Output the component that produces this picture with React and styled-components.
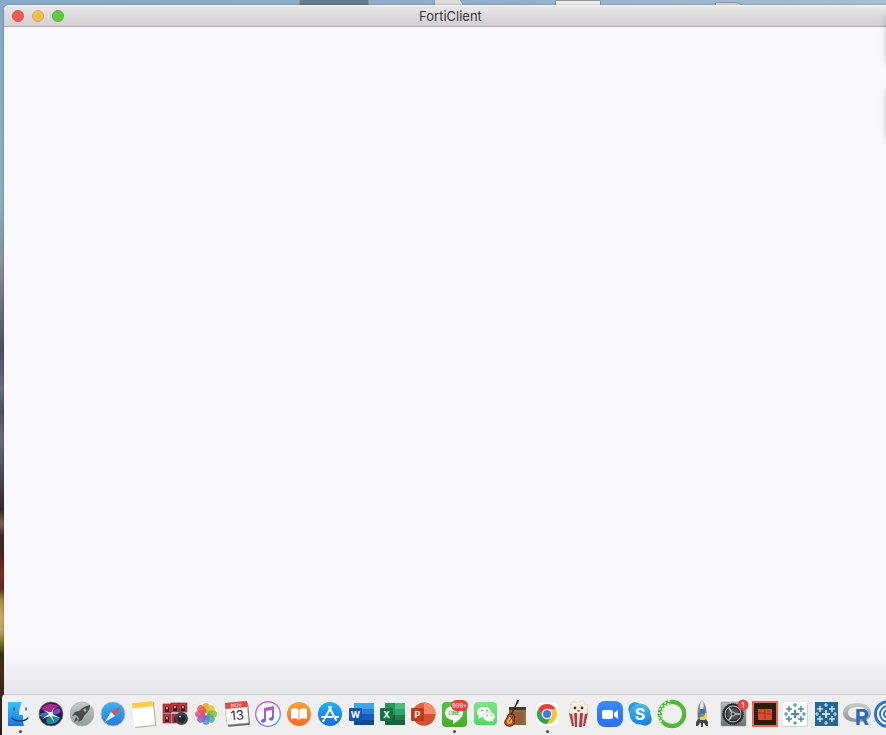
import styled, { createGlobalStyle, css } from 'styled-components';

const GlobalStyle = createGlobalStyle`
  body {
    margin: 0;
    font-family: Inter, 'Liberation Sans', sans-serif;
  }
`;

const Desktop = styled.div`
  position: relative;
  display: flex;
  flex-direction: column;
  height: 100vh;
  overflow: hidden;
  background:
    linear-gradient(
      #86a9c8 0, #8cadc8 200px, #7f97aa 250px, #8c969c 258px, #6f7683 300px,
      #4a505f 350px, #6a6f80 390px, #4c5160 410px, #6a6b7c 440px, #4a4852 475px,
      #332c2c 510px, #84604f 524px, #3a2a28 535px, #4a2420 555px, #7b3020 575px,
      #5a2a20 588px, #a58a3a 600px, #c9a860 615px, #c8a060 630px, #7f7a20 642px,
      #2d3410 655px, #4a2c18 670px, #3a2218 700px, #2a1a14 735px
    ) left / 5px 100% no-repeat,
    linear-gradient(90deg, #86a9c8, #93b1cf 60%, #a9bed2) #86a9c8;
`;

const DesktopFile = styled.div`
  position: absolute;
  top: ${({ $top }) => $top}px;
  left: ${({ $left }) => $left}px;
  width: ${({ $width }) => $width}px;
  height: 20px;
  box-sizing: border-box;
  border: 1px solid #8f9498;
  border-radius: 1px ${({ $fold }) => ($fold ? '12px' : '1px')} 0 0;
  background: ${({ $color }) => $color};
`;

const Window = styled.main`
  position: relative;
  display: flex;
  flex: 1;
  flex-direction: column;
  min-height: 0;
  margin: 5px -11px 0 4px;
  border-radius: 5px 5px 0 0;
  background: #f9f8fe;
  box-shadow: 0 0 2px rgba(0, 0, 0, 0.4);
`;

const TitleBar = styled.header`
  display: grid;
  grid-template-columns: 1fr auto 1fr;
  align-items: center;
  height: 22px;
  box-sizing: border-box;
  padding: 0 8px;
  border-bottom: 1px solid #b1afb3;
  border-radius: 5px 5px 0 0;
  background: linear-gradient(#eae8eb, #d1cfd2);
  box-shadow: inset 0 1px #f5f4f6;
`;

const WindowButtons = styled.div`
  display: flex;
  gap: 8px;
`;

const WindowButton = styled.button`
  width: 12px;
  height: 12px;
  padding: 0;
  border: 1px solid ${({ $edge }) => $edge};
  border-radius: 50%;
  background: ${({ $color }) => $color};
`;

const Title = styled.h1`
  margin: 0;
  color: #363438;
  font-size: 13px;
  font-weight: 400;
  line-height: 20px;
`;

const Content = styled.section`
  flex: 1;
  background: linear-gradient(transparent calc(100% - 44px), #e5e4ea) #f9f8fe;
`;

const Notice = styled.div`
  position: absolute;
  top: ${({ $top }) => $top}px;
  right: -20px;
  width: 19px;
  height: 48px;
  box-shadow: 0 0 7px rgba(0, 0, 0, 0.25);
`;

const Dock = styled.nav`
  position: relative;
  display: flex;
  flex-shrink: 0;
  height: 41px;
  box-sizing: border-box;
  margin-left: 2px;
  padding: 3px 0 0 3px;
  overflow: hidden;
  border-top: 1px solid #cccbd2;
  border-radius: 4px 0 0 0;
  background: #efeff0;
`;

const DockButton = styled.button`
  display: flex;
  flex: 0 0 31px;
  flex-direction: column;
  align-items: center;
  padding: 0;
  border: 0;
  background: none;

  ${({ $running }) =>
    $running &&
    css`
      &::after {
        content: '';
        width: 3px;
        height: 3px;
        border-radius: 50%;
        background: #4b4b4d;
      }
    `}
`;

const Icon = styled.svg`
  display: block;
  flex-shrink: 0;
  width: 31px;
  height: 32px;
  overflow: visible;
  font-family: Inter, 'Liberation Sans', sans-serif;
  text-anchor: middle;
`;

const Gradient = ({ id, from, to }) => (
  <linearGradient id={id} x1="0" y1="0" x2="0" y2="1">
    <stop offset="0" stopColor={from} />
    <stop offset="1" stopColor={to} />
  </linearGradient>
);

const Finder = () => (
  <>
    <Gradient id="finder" from="#39c3fb" to="#1b74e8" />
    <rect x="-12" y="-12" width="24" height="24" rx="1" fill="#e9f2fb" />
    <path d="M-12-12H2C0-8-1-4-1 1H3C3 5 3 9 4 12H-12Z" fill="url(#finder)" />
    <path d="M-6-6V-4M6-6V-4" stroke="#23415e" strokeWidth="1.3" strokeLinecap="round" />
    <path d="M-8 4C-4 8 4 8 8 4" fill="none" stroke="#1d3650" strokeWidth="1.2" strokeLinecap="round" />
  </>
);

const Siri = () => (
  <>
    <Gradient id="siri" from="#3a1747" to="#152346" />
    <circle r="12" fill="url(#siri)" stroke="#77758a" strokeWidth=".8" />
    <path d="M0 0C-6-1-9-4-9-6C-5-11 4-11 8-7C4-6 2-3 0 0Z" fill="#c02c9c" opacity=".85" />
    <path d="M0 0C3-4 7-7 9-5C11-1 7 1 0 0Z" fill="#7950d8" opacity=".9" />
    <path d="M0 0C-5-2-10-2-11 1C-10 5-5 4 0 0Z" fill="#3c78dc" opacity=".9" />
    <path d="M0 0C-5 4-6 8-3 10C3 11 8 7 9 4C5 1 3 0 0 0Z" fill="#249aa2" opacity=".85" />
    <path d="M0-1L3-7L1 0L9 4L1 2L3 8L-1 2L-9 5L-2 0L-7-4Z" fill="#d9f6ff" />
    <circle r="2" fill="#fff" />
  </>
);

const Launchpad = () => (
  <>
    <Gradient id="launchpad" from="#c4cbcc" to="#929998" />
    <circle r="12" fill="url(#launchpad)" stroke="#b1b8b8" strokeWidth=".8" />
    <path d="M8-9C3-8 0-6-3-3L-7-2L-10 2L-6 1L-3 4L-4 8L0 6L2 2C5-1 8-4 8-9Z" fill="#474b4c" />
    <path d="M-6 3L-8 8L-4 6" fill="#474b4c" />
    <circle cx="3" cy="-4" r="1.6" fill="#adb3b4" />
  </>
);

const Safari = () => (
  <>
    <Gradient id="safari" from="#36b5f3" to="#2475dd" />
    <circle r="12" fill="url(#safari)" stroke="#a9bccd" strokeWidth="1" />
    <circle r="9.5" fill="none" stroke="#65b8ee" strokeWidth="1" strokeDasharray=".5 1.5" />
    <path d="M8-8L-2-2L2 2Z" fill="#e74c4a" />
    <path d="M-8 8L-2-2L2 2Z" fill="#edf0f3" />
  </>
);

const Notes = () => (
  <g transform="rotate(-6)">
    <rect x="-10" y="-11" width="21" height="24" fill="#b3a98d" />
    <rect x="-11" y="-12" width="21" height="24" fill="#fefefc" />
    <rect x="-11" y="-12" width="21" height="5" fill="#f9cf45" />
    <path d="M-11-6.5H10" stroke="#c3b37a" strokeWidth=".6" strokeDasharray="1 1" />
  </g>
);

const booths = [[-12, -10], [-4, -11], [4, -11], [-12, 0], [-3, 0]];

const PhotoBooth = () => (
  <>
    {booths.map(([x, y]) => (
      <g key={`${x},${y}`} transform={`translate(${x} ${y})`}>
        <rect width="8" height="9" fill="#c23840" stroke="#752a2f" strokeWidth=".6" />
        <path d="M2 8V4Q2 2 4 2Q6 2 6 4V8Z" fill="#351b22" />
        <ellipse cx="4" cy="4" rx="1" ry="1.5" fill="#db9a86" />
      </g>
    ))}
    <circle cx="6.500" cy="4.500" r="6.500" fill="#3d3e43" />
    <circle cx="6.500" cy="4.500" r="4.500" fill="#25262b" stroke="#55575d" strokeWidth=".6" />
    <circle cx="5" cy="2.500" r="1.100" fill="#a5acb5" />
  </>
);

const petals = ['#f39a2f', '#d3ca2b', '#7fba40', '#46ae93', '#5587d4', '#8963b8', '#cd5395', '#ec5347'];

const Photos = () => (
  <>
    <circle r="12.5" fill="#fbfbfb" stroke="#d9d9d9" strokeWidth=".6" />
    {petals.map((color, i) => (
      <rect key={color} x="-3.5" y="-11" width="7" height="10" rx="3.5" fill={color} opacity=".85" transform={`rotate(${i * 45})`} />
    ))}
  </>
);

const Calendar = () => (
  <g transform="rotate(-5)">
    <rect x="-10" y="-10" width="22" height="22" rx="1" fill="#6b6b70" />
    <rect x="-11" y="-12" width="22" height="22" rx="1" fill="#fafafa" stroke="#a2a2a5" strokeWidth=".5" />
    <path d="M-11-12H11V-6H-11Z" fill="#e24a42" />
    <text y="-7" fontSize="5" fill="#fff">NOV</text>
    <text y="6" fontSize="13" fill="#303033">13</text>
  </g>
);

const Music = () => (
  <>
    <linearGradient id="music" x1="0" y1="0" x2="1" y2="1">
      <stop offset="0" stopColor="#f657a2" />
      <stop offset=".5" stopColor="#a569ea" />
      <stop offset="1" stopColor="#43b4f3" />
    </linearGradient>
    <linearGradient id="note" x1="0" y1="0" x2="0" y2="1">
      <stop offset="0" stopColor="#df4fae" />
      <stop offset="1" stopColor="#5272e6" />
    </linearGradient>
    <circle r="12.300" fill="#fcfbfe" stroke="url(#music)" strokeWidth="1.400" />
    <path
      d="M-4-6L6-8V4C6 6 4 7 2.500 6.500C0 6 1 3 4 3V-4L-2-3V6C-2 8-4 9-6 8.500C-8 7-7 5-4 5Z"
      fill="url(#note)"
    />
  </>
);

const Books = () => (
  <>
    <Gradient id="books" from="#fba334" to="#f06b25" />
    <circle r="12" fill="url(#books)" />
    <path d="M0-4C-2-6-5-6-8-5V5C-5 4-2 4 0 6C2 4 5 4 8 5V-5C5-6 2-6 0-4Z" fill="#fff" />
    <path d="M0-4V6" stroke="#f39b54" strokeWidth="1" />
  </>
);

const AppStore = () => (
  <>
    <Gradient id="appstore" from="#21b2f8" to="#1769e7" />
    <circle r="12" fill="url(#appstore)" />
    <path d="M1-7L-5 4M-1-7L6 6M-8 3H2M5 3H8M-6 6L-7 7" fill="none" stroke="#fff" strokeWidth="2" strokeLinecap="round" />
  </>
);

const Office = ({ letter, color, children }) => (
  <>
    {children}
    <rect x="-12" y="-6" width="13" height="13" rx="1" fill={color} />
    <text x="-5.500" y="4" fontSize="9" fontWeight="700" fill="#fff">{letter}</text>
  </>
);

const Word = () => (
  <Office letter="W" color="#1854b1">
    <rect x="-7" y="-11" width="20" height="22" rx="1" fill="#2b7cd3" />
    <path d="M-7-5V-10Q-7-11-6-11H12Q13-11 13-10V-5Z" fill="#41a5ee" />
    <path d="M-7 0H13V6H-7Z" fill="#185abd" />
    <path d="M-7 6H13V10Q13 11 12 11H-6Q-7 11-7 10Z" fill="#164793" />
  </Office>
);

const Excel = () => (
  <Office letter="X" color="#17733f">
    <rect x="-7" y="-11" width="20" height="22" rx="1" fill="#279663" />
    <path d="M3-11H12Q13-11 13-10V-5H3Z" fill="#45c184" />
    <path d="M3-5H13V1H3Z" fill="#31a36c" />
    <path d="M-7 1H3V6H-7Z" fill="#185c3b" />
    <path d="M3 1H13V6H3Z" fill="#21804e" />
    <path d="M-7 6H13V10Q13 11 12 11H-6Q-7 11-7 10Z" fill="#1d6041" />
  </Office>
);

const PowerPoint = () => (
  <Office letter="P" color="#c13b1b">
    <circle cx="1" r="11.500" fill="#e2643f" />
    <path d="M1-11.500A11.500 11.500 0 0 1 12.500 0H1Z" fill="#f58a69" />
    <path d="M-10.500 0H12.500A11.500 11.500 0 0 1-10.500 0Z" fill="#d35230" />
  </Office>
);

const Line = () => (
  <>
    <Gradient id="line" from="#53c63f" to="#45ad28" />
    <rect x="-12" y="-12" width="25" height="25" rx="4" fill="url(#line)" />
    <path d="M0-8C-6-8-9-5-9-1C-9 3-5 6-1 6V10C4 7 9 3 9-1C9-5 6-8 0-8Z" fill="#fff" />
    <text y="1" fontSize="5" fontWeight="700" fill="#3eae2b">LINE</text>
    <rect x="-3" y="-14" width="17" height="11" rx="5.500" fill="#e63f3c" />
    <text x="5.500" y="-6" fontSize="6" fill="#fff">999+</text>
  </>
);

const WeChat = () => (
  <>
    <Gradient id="wechat" from="#7de588" to="#55d467" />
    <rect x="-11" y="-12" width="23" height="23" rx="4" fill="url(#wechat)" />
    <path d="M-1-7C-5-7-8-5-8-2C-8 0-7 1-6 2L-7 5L-3 3C3 4 6 1 6-2C6-5 3-7-1-7Z" fill="#fff" />
    <path d="M4-2C0-2-2 0-2 3C-2 6 2 8 6 7L9 8L8 6C10 5 10 4 10 3C10 0 8-2 4-2Z" fill="#f3fff3" stroke="#72d97d" strokeWidth=".6" />
    <g fill="#5cbf69">
      <circle cx="-3" cy="-3.500" r="1" />
      <circle cx="2" cy="-3.500" r="1" />
      <circle cx="2" cy="1.500" r=".8" />
      <circle cx="6" cy="1.500" r=".8" />
    </g>
  </>
);

const GarageBand = () => (
  <>
    <rect x="-7" y="-7" width="17" height="18" fill="#8d6037" />
    <path d="M-7-7H10V-4H-7Z" fill="#42382f" />
    <path d="M-6-3H9V9" fill="none" stroke="#b48350" strokeWidth=".8" />
    <path d="M-6 3L1-11" stroke="#34251f" strokeWidth="1.600" />
    <path d="M0-11L1-14L3-14L2-10Z" fill="#392f2a" />
    <path d="M-8 1C-6-1-5 1-3 0L-1 3C-3 5-1 7-2 10C-4 13-9 13-11 10C-12 7-10 6-9 4Z" fill="#c14a1e" stroke="#4f2013" strokeWidth="1" />
    <path d="M-7 3L-4 4L-4 9L-8 10L-9 7Z" fill="#f9ba49" />
    <path d="M-7 8L-3 2" stroke="#5c3423" strokeWidth="1" />
  </>
);

const Chrome = () => (
  <>
    <rect x="-11" y="-12" width="23" height="24" rx="5" fill="#fff" stroke="#ddd" strokeWidth=".5" />
    <path d="M-8.700-5A10 10 0 0 1 8.700-5H0L-4.300 2.500Z" fill="#e5443a" />
    <path d="M8.700-5A10 10 0 0 1 0 10L4.300 2.500L0-5Z" fill="#f9c72d" />
    <path d="M0 10A10 10 0 0 1-8.700-5L-4.300 2.500H4.300Z" fill="#2fa352" />
    <circle r="5.200" fill="#fff" />
    <circle r="4" fill="#397ee8" />
  </>
);

const Popcorn = () => (
  <>
    <path d="M-9-1L-6 12Q1 14 7 12L10-1Z" fill="#f0e4e3" />
    <path d="M-9-1H-6L-4 12H-6ZM-4-1H-1V13H-3ZM2-1H5L4 13H1ZM7-1H10L7 12H5Z" fill="#b23d48" />
    <g fill="#f7ebdc" stroke="#d7c8b5" strokeWidth=".5">
      <circle cx="-6" cy="-3" r="3" />
      <circle cx="7" cy="-3" r="3" />
      <circle cx="-4" cy="-9" r="3.500" />
      <circle cx="4" cy="-10" r="3.500" />
      <circle cx="7" cy="-7" r="3" />
    </g>
    <ellipse cx="1" cy="-6" rx="7" ry="5" fill="#faf1e5" />
    <circle cx="-3" cy="-6" r="1.400" fill="#45302e" />
    <circle cx="4" cy="-6" r="1.400" fill="#45302e" />
    <path d="M-1-4Q1 0 2-4Z" fill="#c74146" />
  </>
);

const Zoom = () => (
  <>
    <Gradient id="zoom" from="#3a8bff" to="#2871ed" />
    <rect x="-12" y="-13" width="26" height="26" rx="8" fill="url(#zoom)" />
    <rect x="-7" y="-4" width="11" height="9" rx="2" fill="#fff" />
    <path d="M5-1L9-4V5L5 2Z" fill="#fff" />
  </>
);

const Skype = () => (
  <>
    <Gradient id="skype" from="#45b9ef" to="#1b87d9" />
    <circle cx="-5" cy="-5" r="6.700" fill="#2895df" />
    <circle cx="5" cy="5" r="6.700" fill="#1e84d4" />
    <circle r="10.500" fill="url(#skype)" />
    <text y="5.500" fontSize="16" fontWeight="700" fill="#fff">S</text>
  </>
);

const speckles = [
  [-3, -13], [-7, -11], [-4, -10], [-10, -8], [-7, -8], [-12, -5], [-9, -5], [-13, -1],
  [-10, -2], [-11, 2], [-13, 4], [-9, 5], [-11, 7],
];

const Anaconda = () => (
  <>
    <circle cx="1" r="12.200" fill="none" stroke="#52b833" strokeWidth="4.200" />
    {speckles.map(([x, y]) => (
      <circle key={`${x},${y}`} cx={x + 1} cy={y} r=".9" fill="#eef4ec" />
    ))}
    {speckles.map(([x, y]) => (
      <circle key={`${x},${y}`} cx={x + 2} cy={y + 2} r=".5" fill="#d8efcf" />
    ))}
  </>
);

const Rocket = () => (
  <>
    <path d="M0-14C-5-8-5-3-4 7H4C5-3 5-8 0-14Z" fill="#85888c" />
    <path d="M0-14C-3-9-2-6-2-4H1C2-8 2-11 0-14Z" fill="#e6e7e8" />
    <path d="M-4 5L-6 8V12H-4L-2 9H-1V13H1V9H2L4 12H6V8L4 5Z" fill="#454546" />
    <path d="M-2-5H3V0H-1Q-2 0-2 3H-4V-1H-2Z" fill="#3878ac" />
    <path d="M3-1H5V4L3 6H-2V3H0Q3 3 3-1Z" fill="#f2cf43" />
  </>
);

const Settings = () => (
  <>
    <Gradient id="settings" from="#b5babd" to="#6d7174" />
    <rect x="-12" y="-12" width="25" height="24" rx="1" fill="url(#settings)" stroke="#8f9497" strokeWidth=".6" />
    <circle r="9.400" fill="#bfc3c4" stroke="#292c2d" strokeWidth="2" />
    <circle r="10.300" fill="none" stroke="#292c2d" strokeWidth="1.200" strokeDasharray="1 1" />
    <circle r="6.800" fill="#4d5153" stroke="#2c2f31" strokeWidth="1.500" />
    <path d="M0 0L-4-6M0 0H7M0 0L-4 6" stroke="#bfc3c4" strokeWidth="1.600" />
    <circle r="2" fill="#323537" stroke="#bfc3c4" strokeWidth="1" />
    <circle cx="10" cy="-9" r="5.500" fill="#e54341" />
    <text x="10" y="-6" fontSize="8" fill="#fff">1</text>
  </>
);

const Circuit = () => (
  <>
    <rect x="-11" y="-12" width="24" height="24" fill="#2b1c0c" stroke="#e56c4d" strokeWidth="2" />
    <rect x="-6" y="-5" width="14" height="11" fill="#dd4a2f" />
    <path d="M-5-1H1M1-4V5M3 0H7M3-3H6" fill="none" stroke="#8f2d1e" strokeWidth=".8" />
    <path d="M-8-5V6M10-5V6" stroke="#6e2c1c" strokeDasharray="1 1" />
  </>
);

const marks = [
  [0, 0, 4, 2], [-6, -5, 3, 1.5], [6, -5, 3, 1.5], [-6, 5, 3, 1.5], [6, 5, 3, 1.5],
  [0, -9, 2, 1.2], [0, 9, 2, 1.2], [-9, 0, 2, 1.2], [9, 0, 2, 1.2],
];

const TableauMark = ({ color }) =>
  marks.map(([x, y, r, width]) => (
    <path key={`${x},${y}`} d={`M${x - r} ${y}H${x + r}M${x} ${y - r}V${y + r}`} stroke={color} strokeWidth={width} />
  ));

const Tableau = () => (
  <>
    <rect x="-12" y="-11" width="25" height="24" fill="#d2d2d3" />
    <rect x="-12" y="-12" width="24" height="24" fill="#fff" />
    <TableauMark color="#4588b4" />
  </>
);

const TableauPrep = () => (
  <>
    <rect x="-11" y="-12" width="23" height="24" fill="#286791" />
    <TableauMark color="#c5e2f0" />
  </>
);

const RStats = () => (
  <>
    <Gradient id="ring" from="#c9cbd0" to="#8d9198" />
    <path d="M0-11C-8-11-14-7-14-1C-14 5-8 8 0 8C8 8 14 5 14-1C14-7 8-11 0-11ZM2-7C8-7 11-5 11-1C11 3 8 5 2 5C-5 5-9 2-9-1C-9-5-5-7 2-7Z" fillRule="evenodd" fill="url(#ring)" />
    <text x="5" y="11" fontSize="22" fontWeight="700" fill="#286bbd">R</text>
  </>
);

const Target = () => (
  <g fill="none" stroke="#2974c7">
    <circle r="12.500" strokeWidth="3" fill="#fff" />
    <circle r="8" strokeWidth="2" />
    <circle r="4" strokeWidth="2" />
  </g>
);

const apps = [
  { name: 'Finder', icon: Finder, running: true },
  { name: 'Siri', icon: Siri },
  { name: 'Launchpad', icon: Launchpad },
  { name: 'Safari', icon: Safari },
  { name: 'Notes', icon: Notes },
  { name: 'Photo Booth', icon: PhotoBooth },
  { name: 'Photos', icon: Photos },
  { name: 'Calendar', icon: Calendar },
  { name: 'iTunes', icon: Music },
  { name: 'Books', icon: Books },
  { name: 'App Store', icon: AppStore },
  { name: 'Word', icon: Word },
  { name: 'Excel', icon: Excel },
  { name: 'PowerPoint', icon: PowerPoint },
  { name: 'LINE', icon: Line, running: true },
  { name: 'WeChat', icon: WeChat },
  { name: 'GarageBand', icon: GarageBand },
  { name: 'Chrome', icon: Chrome, running: true },
  { name: 'Popcorn Time', icon: Popcorn },
  { name: 'Zoom', icon: Zoom },
  { name: 'Skype', icon: Skype },
  { name: 'Anaconda', icon: Anaconda },
  { name: 'Python Launcher', icon: Rocket },
  { name: 'System Preferences', icon: Settings },
  { name: 'Circuit', icon: Circuit },
  { name: 'Tableau', icon: Tableau },
  { name: 'Tableau Prep', icon: TableauPrep },
  { name: 'R', icon: RStats },
  { name: 'Target', icon: Target },
];

const App = () => (
  <Desktop>
    <GlobalStyle />
    <DesktopFile $top={-4} $left={299} $width={70} $color="#667c8b" />
    <DesktopFile $top={-4} $left={434} $width={30} $color="#dcdcdc" $fold />
    <DesktopFile $top={0} $left={555} $width={46} $color="#eeeeef" />
    <DesktopFile $top={2} $left={715} $width={32} $color="#d4d5d7" $fold />
    <Window>
      <TitleBar>
        <WindowButtons>
          <WindowButton type="button" aria-label="Close" $color="#ee5c54" $edge="#d9534d" />
          <WindowButton type="button" aria-label="Minimize" $color="#f6bd4b" $edge="#dca544" />
          <WindowButton type="button" aria-label="Zoom" $color="#60cb40" $edge="#54b53b" />
        </WindowButtons>
        <Title>FortiClient</Title>
      </TitleBar>
      <Content />
    </Window>
    <Notice $top={16} />
    <Notice $top={90} />
    <Dock aria-label="Dock">
      {apps.map(({ name, icon: Drawing, running }) => (
        <DockButton key={name} type="button" aria-label={name} $running={running}>
          <Icon viewBox="-15 -16 31 32" aria-hidden="true">
            <Drawing />
          </Icon>
        </DockButton>
      ))}
    </Dock>
  </Desktop>
);

export default App;
